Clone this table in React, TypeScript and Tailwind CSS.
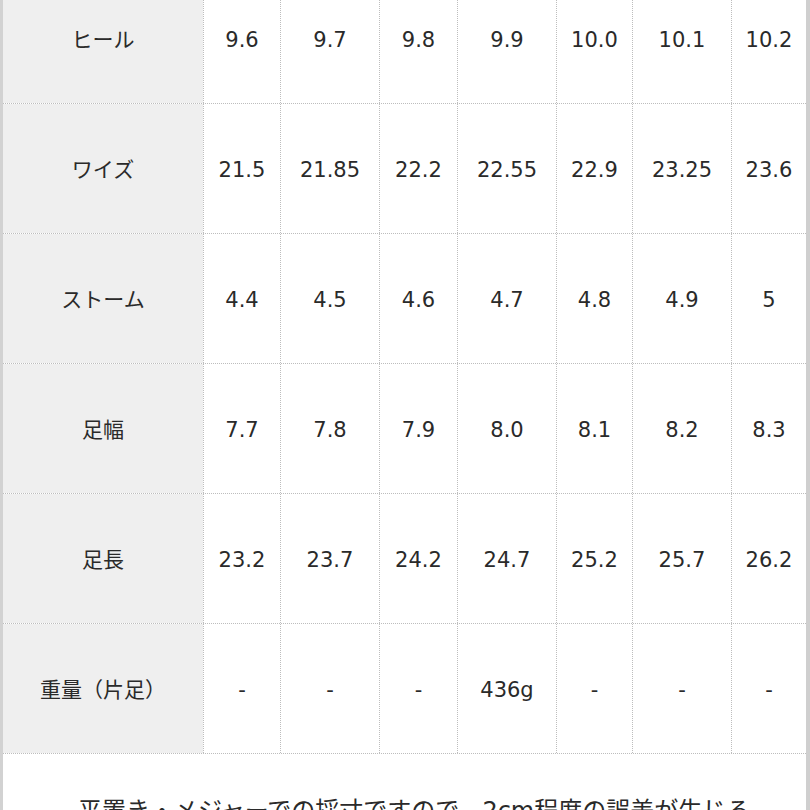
import React from "react";

const widths = ["w-[77px]", "w-[99px]", "w-[78px]", "w-[99px]", "w-[76px]", "w-[99px]", "w-[75px]"];

const rows: { label: string; values: string[] }[] = [
  { label: "ヒール", values: ["9.6", "9.7", "9.8", "9.9", "10.0", "10.1", "10.2"] },
  { label: "ワイズ", values: ["21.5", "21.85", "22.2", "22.55", "22.9", "23.25", "23.6"] },
  { label: "ストーム", values: ["4.4", "4.5", "4.6", "4.7", "4.8", "4.9", "5"] },
  { label: "足幅", values: ["7.7", "7.8", "7.9", "8.0", "8.1", "8.2", "8.3"] },
  { label: "足長", values: ["23.2", "23.7", "24.2", "24.7", "25.2", "25.7", "26.2"] },
  { label: "重量（片足）", values: ["-", "-", "-", "436g", "-", "-", "-"] },
];

export default function App() {
  return (
    <div
      className="w-[810px] h-[810px] overflow-hidden bg-white flex text-[#2a2a2a]"
      style={{ fontFamily: '"DejaVu Sans", "Noto Sans CJK JP", sans-serif' }}
    >
      <div className="w-[3px] shrink-0 bg-[#d2d2d2]" />
      <div className="w-[803px] shrink-0 flex flex-col -mt-[26px]">
        {rows.map((r) => (
          <div key={r.label} className="flex h-[130px] shrink-0 border-b border-dotted border-[#bdbdbd]">
            <div className="w-[200px] shrink-0 bg-[#efefef] flex items-center justify-center pt-[4px] text-[21px]">
              {r.label}
            </div>
            {r.values.map((v, i) => (
              <div
                key={i}
                className={`${widths[i]} shrink-0 border-l border-dotted border-[#bdbdbd] flex items-center justify-center pt-[4px] text-[21px]`}
              >
                {v}
              </div>
            ))}
          </div>
        ))}
        <div className="pt-[41px] pl-[75px] text-[24px] leading-[32px] whitespace-nowrap">
          平置き・メジャーでの採寸ですので、2cm程度の誤差が生じる
        </div>
      </div>
      <div className="w-[4px] shrink-0 bg-[#cfcfcf]" />
    </div>
  );
}
